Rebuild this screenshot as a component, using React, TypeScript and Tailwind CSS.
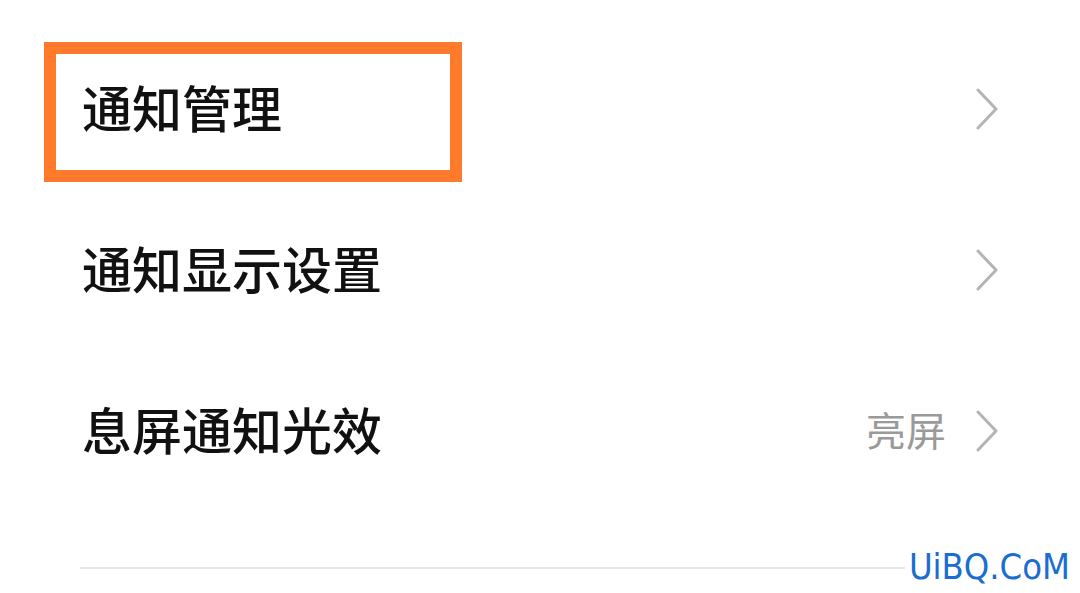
import React from "react";

function Chevron() {
  return (
    <svg width="24" height="42" viewBox="0 0 24 42" className="shrink-0">
      <polyline points="3,2 21,21 3,40" fill="none" stroke="#b4b4b4" strokeWidth="3" strokeLinecap="round" strokeLinejoin="round" />
    </svg>
  );
}

function Row({ title, value }: { title: string; value?: string }) {
  return (
    <div className="h-[161px] flex items-center justify-between pl-[82px] pr-[81px]">
      <span className="text-[50px] leading-none font-medium text-[#111] -mt-[5px]">{title}</span>
      <div className="flex items-center gap-[29px]">
        {value && <span className="text-[40px] leading-none text-[#9a9a9a] -mt-[3px]">{value}</span>}
        <Chevron />
      </div>
    </div>
  );
}

export default function App() {
  return (
    <div
      className="relative w-[1080px] h-[593px] bg-white overflow-hidden pt-[28px]"
      style={{ fontFamily: '"Noto Sans CJK SC", "Noto Sans", sans-serif' }}
    >
      <Row title="通知管理" />
      <Row title="通知显示设置" />
      <Row title="息屏通知光效" value="亮屏" />
      <div className="mt-[56px] ml-[80px] mr-[80px] h-[2px] bg-[#e6e6e6]" />
      <div className="absolute left-[44px] top-[42px] w-[418px] h-[140px] border-[12px] border-[#ff7a2b]" />
      <div
        className="absolute right-[10px] bottom-[8px] text-[36px] leading-none text-[#1a6dd1] bg-white pl-1"
        style={{ fontFamily: '"DejaVu Sans Condensed", "Liberation Sans Narrow", "Noto Sans", sans-serif' }}
      >
        UiBQ.CoM
      </div>
    </div>
  );
}
